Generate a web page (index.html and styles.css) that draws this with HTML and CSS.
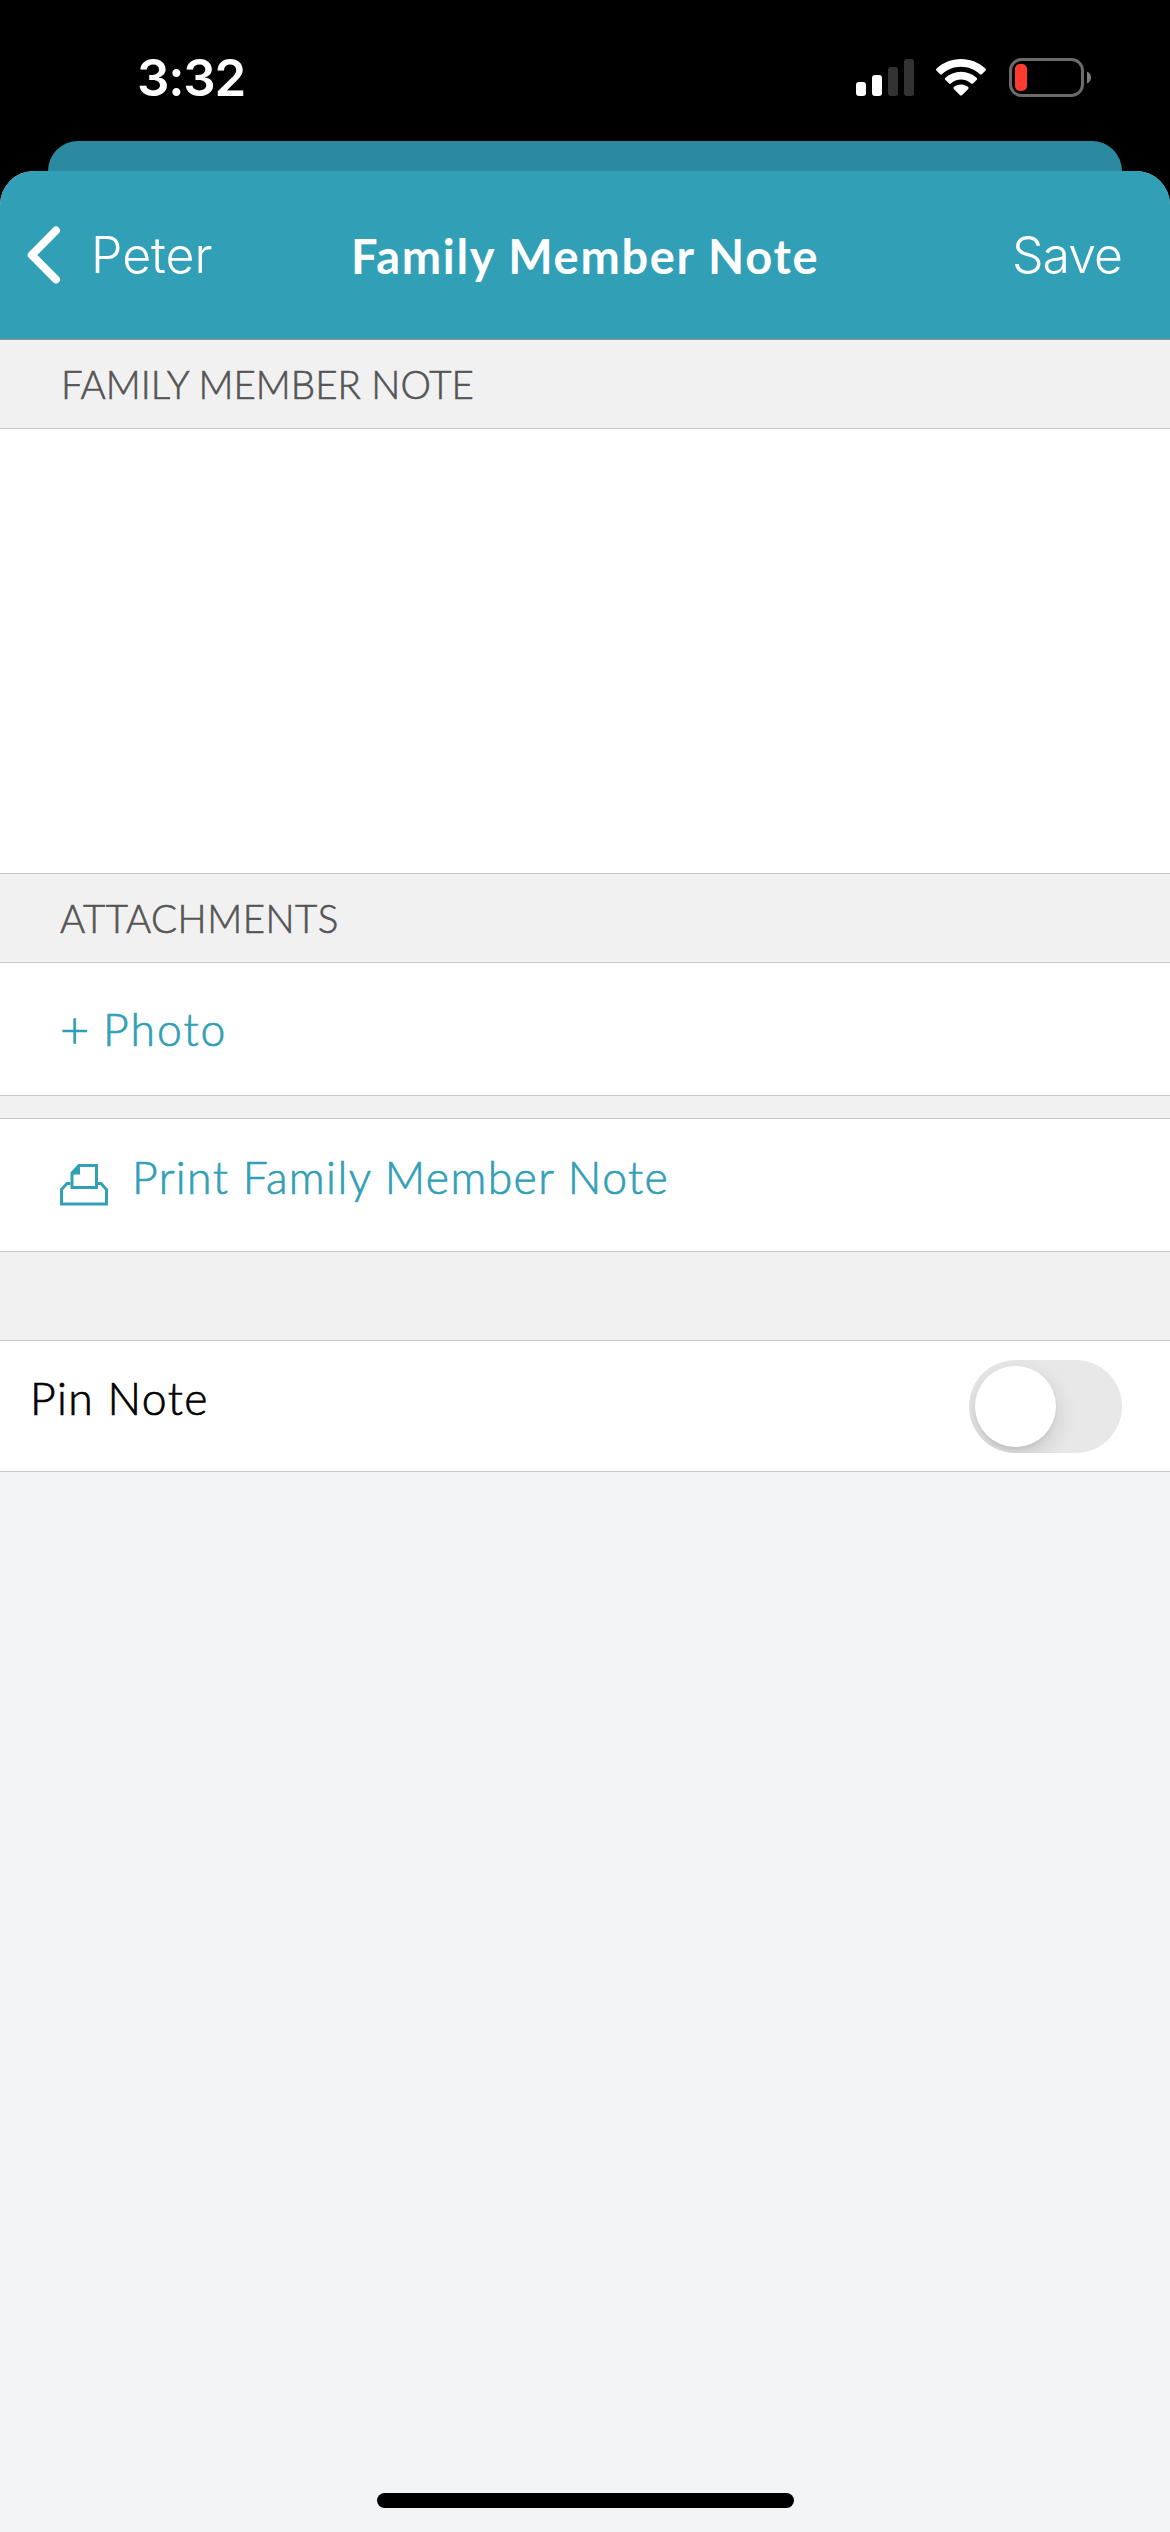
FILE: index.html
```html
<!DOCTYPE html>
<html lang="en">
<head>
<meta charset="utf-8">
<title>Family Member Note</title>
<link rel="stylesheet" href="styles.css">
</head>
<body>
<div class="screen">
  <header class="status">
    <span class="time">3:32</span>
    <svg class="signal" width="58" height="37" viewBox="0 0 58 37">
      <rect x="0" y="23" width="10" height="14" rx="3" fill="#fff"/>
      <rect x="16" y="16" width="10" height="21" rx="3" fill="#fff"/>
      <rect x="32" y="8" width="10" height="29" rx="3" fill="#333"/>
      <rect x="48" y="0" width="10" height="37" rx="3" fill="#333"/>
    </svg>
    <svg class="wifi" width="50" height="37" viewBox="0 0 50 37" fill="#fff">
      <path d="M25 0C34.500 0 43 3.600 49.600 9.700Q50.400 10.600 49.600 11.500L45.800 15.300Q45 16 44 15.200C38.800 10.400 32.200 7.700 25 7.700S11.200 10.400 6 15.200Q5 16 4.200 15.300L.4 11.500Q-.4 10.600.4 9.700C7 3.600 15.500 0 25 0Z"/>
      <path d="M25 12.700C31 12.700 36.500 15 40.800 18.900Q41.700 19.800 40.800 20.700L36.900 24.500Q36 25.300 35.100 24.500C32.300 22 28.800 20.500 25 20.500S17.700 22 14.900 24.500Q14 25.300 13.100 24.500L9.200 20.700Q8.300 19.800 9.200 18.900C13.500 15 19 12.700 25 12.700Z"/>
      <path d="M25 25.500C27.800 25.500 30.300 26.500 32.200 28.100Q33 29 32.200 29.900L25.900 36.200Q25 37 24.100 36.200L17.800 29.900Q17 29 17.800 28.100C19.700 26.500 22.200 25.500 25 25.500Z"/>
    </svg>
    <svg class="battery" width="82" height="39" viewBox="0 0 82 39">
      <rect x="1.500" y="1.500" width="72" height="36" rx="11" fill="none" stroke="#6b6b6b" stroke-width="3"/>
      <rect x="6" y="6" width="12" height="27" rx="5" fill="#ff3b30"/>
      <path d="M78 13.500C80.400 14.500 82 16.800 82 19.500S80.400 24.500 78 25.500Z" fill="#7d7d7d"/>
    </svg>
  </header>
  <div class="back-sheet"></div>
  <main class="sheet">
    <nav class="navbar">
      <a class="back">
        <svg width="34" height="58" viewBox="0 0 34 58" fill="none" stroke="#fff" stroke-width="8" stroke-linecap="round" stroke-linejoin="round"><path d="M29 4.500L4.700 29L29 53.500"/></svg>
        <span class="back-label">Peter</span>
      </a>
      <h1 class="title">Family Member Note</h1>
      <a class="save">Save</a>
    </nav>
    <h2 class="section"><span class="t-family">FAMILY MEMBER NOTE</span></h2>
    <div class="note"></div>
    <h2 class="section attachments"><span class="t-attach">ATTACHMENTS</span></h2>
    <div class="row photo"><span class="t-plus">+</span><span class="t-photo">Photo</span></div>
    <div class="gap-small"></div>
    <div class="row print">
      <svg class="print-icon" width="48" height="42" viewBox="0 0 48 42" fill="none" stroke="#319fb6" stroke-width="3">
        <path d="M10.500 19.500H7L1.500 25.500V40H46.500V25.500L41 19.500H37.500"/>
        <path d="M19 1.500H36.500V23.500H12V9Z"/>
        <path d="M20 1V10.500H12V9Z" fill="#319fb6" stroke="none"/>
      </svg>
      <span class="t-print">Print Family Member Note</span>
    </div>
    <div class="gap-large"></div>
    <div class="row pin">
      <span class="t-pin">Pin Note</span>
      <span class="toggle"><span class="knob"></span></span>
    </div>
    <footer class="home"><span class="home-bar"></span></footer>
  </main>
</div>
</body>
</html>
```
FILE: styles.css
```css
* { box-sizing: border-box; }
body { margin: 0; background: #000; font-family: Lato, "Open Sans", sans-serif; }
.screen { width: 1170px; height: 2532px; display: flex; flex-direction: column; background: #000; overflow: hidden; }
.status { height: 141px; flex: none; display: flex; align-items: flex-start; padding-left: 137px; font-family: Inter, sans-serif; }
.time { width: 719px; padding-top: 48px; color: #fff; font-size: 51px; line-height: 60px; font-weight: 600; letter-spacing: -1.2px; }
.signal { margin-top: 59px; }
.wifi { margin: 59px 0 0 22px; }
.battery { margin: 58px 0 0 23px; }
.back-sheet { height: 30px; flex: none; margin: 0 48px; background: #2b8a9f; border-radius: 30px 30px 0 0; }
.sheet { flex: 1; display: flex; flex-direction: column; background: #f3f4f6; border-radius: 34px 34px 0 0; overflow: hidden; }
.navbar { height: 169px; flex: none; display: grid; grid-template-columns: 351px 1fr 158px; align-items: center; background: #319fb6; border-bottom: 1px solid #8a9296; color: #fff; }
.back { display: flex; align-items: center; padding-left: 27px; }
.back-label, .save { font-family: Inter, sans-serif; font-size: 50px; line-height: 60px; font-weight: 300; white-space: nowrap; }
.back-label { margin-left: 30px; }
.save { letter-spacing: -1px; }
.title { margin: 0; font-size: 47px; line-height: 60px; font-weight: 700; letter-spacing: 1.7px; white-space: nowrap; padding-top: 2px; }
.section { margin: 0; height: 89px; flex: none; padding-left: 61px; background: #f1f1f1; border-bottom: 1px solid #c8c8c8; color: #555; font-size: 38.500px; line-height: 89px; font-weight: 300; white-space: nowrap; -webkit-text-stroke: 0.6px currentColor; }
.attachments { height: 90px; border-top: 1px solid #c8c8c8; padding-left: 60px; letter-spacing: 0.5px; }
.note { height: 444px; flex: none; background: #fff; }
.row { flex: none; display: flex; background: #fff; border-bottom: 1px solid #c8c8c8; font-size: 44.500px; font-weight: 300; color: #319fb6; letter-spacing: 1.4px; white-space: nowrap; -webkit-text-stroke: 0.7px currentColor; }
.photo { height: 133px; line-height: 132px; padding-left: 60px; letter-spacing: 2px; }
.t-plus { width: 43px; font-size: 51px; }
.gap-small { height: 23px; flex: none; background: #f1f1f1; border-bottom: 1px solid #c8c8c8; }
.print { height: 133px; padding-left: 60px; line-height: 116px; }
.print-icon { margin-top: 45px; }
.t-print { margin-left: 24px; }
.gap-large { height: 89px; flex: none; background: #f1f1f1; border-bottom: 1px solid #c8c8c8; }
.pin { height: 131px; padding: 0 48px 0 30px; justify-content: space-between; color: #000; line-height: 114px; }
.toggle { width: 153px; height: 93px; margin-top: 19px; padding: 6px; border-radius: 47px; background: #e8e8e8; overflow: hidden; }
.knob { display: block; width: 81px; height: 81px; border-radius: 50%; background: #fff; box-shadow: 0 9px 24px rgba(0,0,0,.15), 0 3px 3px rgba(0,0,0,.05); }
.home { margin-top: auto; height: 39px; display: flex; justify-content: center; }
.home-bar { width: 417px; height: 15px; border-radius: 8px; background: #000; }
```
